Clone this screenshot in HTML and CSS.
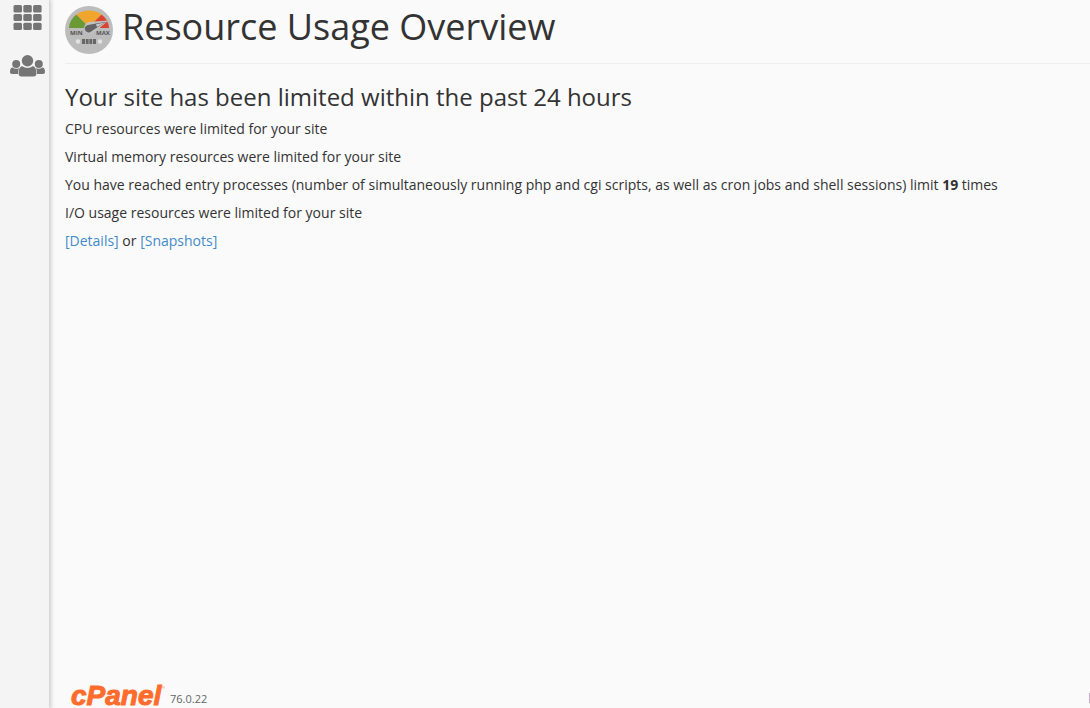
FILE: index.html
```html
<!DOCTYPE html>
<html lang="en">
<head>
<meta charset="utf-8">
<meta name="viewport" content="width=device-width, initial-scale=1">
<title>Resource Usage Overview</title>
<link rel="stylesheet" href="styles.css">
</head>
<body>
<div class="layout">
  <nav class="sidebar" aria-label="Main">
    <a class="nav-link" href="#home" aria-label="Home">
      <svg width="29" height="26" viewBox="0 0 29 26" fill="currentColor" aria-hidden="true">
        <rect x="0.500" y="0" width="8.500" height="7.500" rx="1.500"/><rect x="10.300" y="0" width="8.500" height="7.500" rx="1.500"/><rect x="20.100" y="0" width="8.500" height="7.500" rx="1.500"/>
        <rect x="0.500" y="9" width="8.500" height="7" rx="1.500"/><rect x="10.300" y="9" width="8.500" height="7" rx="1.500"/><rect x="20.100" y="9" width="8.500" height="7" rx="1.500"/>
        <rect x="0.500" y="17.700" width="8.500" height="7.300" rx="1.500"/><rect x="10.300" y="17.700" width="8.500" height="7.300" rx="1.500"/><rect x="20.100" y="17.700" width="8.500" height="7.300" rx="1.500"/>
      </svg>
    </a>
    <a class="nav-link" href="#users" aria-label="User manager">
      <svg width="35" height="22" viewBox="0 0 35 22" fill="currentColor" aria-hidden="true">
        <circle cx="6.200" cy="9" r="4"/><circle cx="28.800" cy="9" r="4"/>
        <path d="M0 17c0-3 1-4.500 2.600-4.500 1 .8 2.200 1.200 3.600 1.200s2.400-.4 3.200-1C8.500 14 8 16 8 19H2c-1.300 0-2-.7-2-2zM35 17c0-3-1-4.500-2.600-4.500-1 .8-2.200 1.200-3.600 1.200s-2.400-.4-3.200-1C26.500 14 27 16 27 19h6c1.300 0 2-.7 2-2z"/>
        <circle cx="17.500" cy="5.800" r="5.700"/>
        <path d="M8.600 18.500c0-5 1.600-7.300 4-7.300 1.300 1.100 3 1.700 4.900 1.700s3.600-.6 4.900-1.700c2.400 0 4 2.300 4 7.300 0 2-1 3-2.800 3H11.400c-1.800 0-2.800-1-2.800-3z"/>
      </svg>
    </a>
  </nav>
  <div class="page">
    <main class="content">
      <header class="page-header">
        <svg class="gauge" width="48" height="48" viewBox="0 0 48 48" aria-hidden="true">
          <circle cx="24" cy="24" r="24" fill="#bcbcbc"/>
          <path d="M4 22A20 18 0 0 1 11.500 8.500L21 18v4z" fill="#6b9a35"/>
          <path d="M11.500 8.500C18 3 30 3 36.500 8.500L27 18h-6z" fill="#f0a62c"/>
          <path d="M36.500 8.500A20 18 0 0 1 44 22H29l-2-4z" fill="#dc4432"/>
          <path d="M43.500 14.500 24 16A6 6 0 1 0 29 26.500z" fill="#c2c2c2"/>
          <path d="M41.500 15.800 31 17.500l-8 1.500a3.800 3.800 0 1 0 3.500 6.200l6-4z" fill="#636363"/>
          <path d="M40 16.600 32 21l-1-2.700z" fill="#c8c8c8"/>
          <text class="gauge-label" x="5" y="29">MIN</text>
          <text class="gauge-label" x="31" y="29">MAX</text>
          <circle cx="13" cy="35.500" r="2.200" fill="#e2e2e2"/><circle cx="35" cy="35.500" r="2.200" fill="#e2e2e2"/>
          <path d="M17 33h14v5H17z" fill="#666"/>
          <path d="M20.500 33v5M24 33v5M27.500 33v5" stroke="#aaa" stroke-width="1"/>
        </svg>
        <h1 class="page-title">Resource Usage Overview</h1>
      </header>
      <h2 class="section-title">Your site has been limited within the past 24 hours</h2>
      <p class="line">CPU resources were limited for your site</p>
      <p class="line">Virtual memory resources were limited for your site</p>
      <p class="line">You have reached entry processes (number of simultaneously running php and cgi scripts, as well as cron jobs and shell sessions) limit <b>19</b> times</p>
      <p class="line">I/O usage resources were limited for your site</p>
      <p class="line"><a class="link" href="#details">[Details]</a> or <a class="link" href="#snapshots">[Snapshots]</a></p>
    </main>
    <footer class="footer">
      <svg class="logo" width="96" height="30" viewBox="0 0 96 30" role="img" aria-label="cPanel">
        <text class="logo-text" x="1" y="27">cPanel</text>
        <text class="logo-mark" x="92" y="11">®</text>
      </svg>
      <span class="version">76.0.22</span>
    </footer>
  </div>
</div>
<div class="edge-tab"></div>
</body>
</html>
```
FILE: styles.css
```css
* { box-sizing: border-box; }
body {
  margin: 0;
  background: #fafafa;
  color: #333;
  font: 14px/20px "Open Sans", "Noto Sans", sans-serif;
}
.layout {
  display: flex;
  min-height: 100vh;
}
.sidebar {
  flex: 0 0 49px;
  display: flex;
  flex-direction: column;
  align-items: flex-start;
  gap: 24px;
  padding: 5px 0 0 10px;
  background: #f4f4f4;
  box-shadow: 1px 0 4px 1px #ccc;
}
.nav-link {
  display: flex;
  justify-content: center;
  width: 35px;
  color: #757575;
}
.page {
  flex: 1;
  min-width: 0;
  display: flex;
  flex-direction: column;
  padding-left: 16px;
}
.content { flex: 1; }
.page-header {
  display: flex;
  align-items: flex-start;
  gap: 9px;
  height: 64px;
  padding-top: 6px;
  border-bottom: 1px solid #eee;
}
.gauge { flex: none; }
.gauge-label {
  font: bold 6px "Open Sans", sans-serif;
  fill: #555;
}
.page-title {
  margin: 0;
  font-size: 36px;
  font-weight: 400;
  line-height: 42px;
}
.section-title {
  margin: 20px 0 9px;
  font-size: 24px;
  font-weight: 400;
  line-height: 26px;
}
.line { margin: 0 0 8px; }
.link {
  color: #428bca;
  text-decoration: none;
}
.footer {
  display: flex;
  align-items: flex-end;
  gap: 4px;
  padding-left: 5px;
}
.logo {
  flex: none;
  overflow: visible;
}
.logo-text {
  font: italic bold 28px "Liberation Sans", sans-serif;
  fill: #ff6c2c;
  stroke: #ff6c2c;
  stroke-width: 1px;
}
.logo-mark {
  font: 4px "Liberation Sans", sans-serif;
  fill: #ff6c2c;
}
.version {
  color: #666;
  font-size: 11px;
  line-height: 18px;
}
.edge-tab {
  position: absolute;
  right: 0;
  bottom: 5px;
  width: 1px;
  height: 10px;
  background: #c8a8cc;
}
```
